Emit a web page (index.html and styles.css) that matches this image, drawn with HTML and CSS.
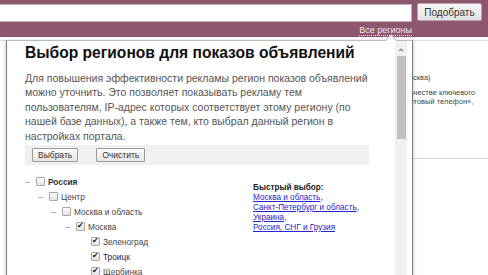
FILE: index.html
```html
<!DOCTYPE html>
<html lang="ru">
<head>
  <meta charset="UTF-8">
  <title>Выбор регионов</title>
  <meta name="viewport" content="width=device-width, initial-scale=1">
  <link rel="stylesheet" href="styles.css">
</head>
<body>

<div class="page">
  <header class="top">
    <div class="search">
      <input type="text" class="search-input">
      <button class="search-btn">Подобрать</button>
    </div>
    <div class="region-row">
      <a class="all-regions">Все регионы</a>
    </div>
  </header>

  <main class="behind">
    <div class="behind-col">
      <p class="b-line b-first">(Москва)</p>
      <p class="b-line">в качестве ключевого</p>
      <p class="b-line">«Сотовый телефон»,</p>
      <div class="b-rule"></div>
    </div>
  </main>

  <!-- всплывающее окно выбора регионов -->
  <div class="popup">
    <div class="notch"></div>
    <div class="popup-body">
      <div class="popup-content">
        <h1 class="popup-title">Выбор регионов для показов объявлений</h1>
        <p class="popup-text">Для повышения эффективности рекламы регион показов объявлений можно уточнить. Это позволяет показывать рекламу тем пользователям, IP-адрес которых соответствует этому региону (по нашей базе данных), а также тем, кто выбрал данный регион в настройках портала.</p>

        <div class="toolbar">
          <button class="tb-btn">Выбрать</button>
          <button class="tb-btn">Очистить</button>
        </div>

        <div class="tree-wrap">
          <div class="tree">
            <div class="row lvl0"><span class="dash">–</span><span class="cb"></span><span class="lbl bold">Россия</span></div>
            <div class="row lvl1"><span class="dash">–</span><span class="cb"></span><span class="lbl">Центр</span></div>
            <div class="row lvl2"><span class="dash">–</span><span class="cb"></span><span class="lbl">Москва и область</span></div>
            <div class="row lvl3"><span class="dash">–</span><span class="cb on"></span><span class="lbl">Москва</span></div>
            <div class="row lvl4"><span class="dash"></span><span class="cb on"></span><span class="lbl">Зеленоград</span></div>
            <div class="row lvl4"><span class="dash"></span><span class="cb on"></span><span class="lbl dark">Троицк</span></div>
            <div class="row lvl4"><span class="dash"></span><span class="cb on"></span><span class="lbl">Щербинка</span></div>
          </div>
          <div class="quick">
            <div class="quick-title">Быстрый выбор:</div>
            <a class="quick-link">Москва и область</a>,<br>
            <a class="quick-link">Санкт-Петербург и область</a>,<br>
            <a class="quick-link">Украина</a>,<br>
            <a class="quick-link">Россия, СНГ и Грузия</a>
          </div>
        </div>
      </div>

      <div class="scrollbar">
        <div class="sb-arrow"></div>
        <div class="sb-thumb"></div>
      </div>
    </div>
  </div>
</div>

</body>
</html>
```

FILE: styles.css
```css
body {
  margin: 0;
  font-family: 'Liberation Sans', Arial, sans-serif;
  background-color: #fff;
  color: #444;
  overflow: hidden;
}
.page {
  position: relative;
  width: 488px;
  height: 275px;
  overflow: hidden;
}
.top {
  background-color: #8f5670;
  height: 37px;
  padding-top: 3px;
  box-sizing: border-box;
}
.search {
  display: flex;
  align-items: flex-start;
}
.search-input {
  width: 412px;
  height: 18px;
  margin: 1px 0 0 0;
  padding: 0;
  border: 1px solid #bfa9b3;
  border-left: none;
  box-sizing: border-box;
  background: #fff;
}
.search-btn {
  margin-left: 5px;
  width: 65px;
  height: 18px;
  padding: 0;
  font-family: inherit;
  font-size: 10px;
  color: #333;
  border: 1px solid #b8a3ad;
  border-radius: 2px;
  background: linear-gradient(#f6f6f6, #e2e2e2);
}
.region-row {
  display: flex;
  justify-content: flex-end;
  padding-right: 76px;
  margin-top: 3px;
}
.all-regions {
  font-size: 9px;
  color: #f4e8ee;
  border-bottom: 1px dotted #e8d8e0;
  line-height: 10px;
}
.behind {
  border-top: 1px solid #ddd;
  margin-top: 3px;
}
.behind-col {
  margin-left: 400px;
  font-size: 7.5px;
  color: #444;
}
.b-line {
  margin: 0;
  line-height: 9px;
}
.b-first {
  margin-top: 32px;
  margin-bottom: 6px;
}
.b-rule {
  margin-top: 52px;
  border-top: 1px solid #d6d6d6;
}
.popup {
  position: absolute;
  left: 6px;
  top: 40px;
  width: 407px;
  height: 260px;
  background: #fff;
  border: 1px solid #7a7a7a;
  border-top-color: #bbb;
  box-sizing: border-box;
  box-shadow: 0 1px 4px rgba(0, 0, 0, 0.25);
}
.notch {
  position: absolute;
  top: -5px;
  left: 380px;
  width: 7px;
  height: 7px;
  background: #fff;
  border-left: 1px solid #bbb;
  border-top: 1px solid #bbb;
  transform: rotate(45deg);
}
.popup-body {
  display: flex;
  height: 100%;
  position: relative;
}
.popup-content {
  flex: 1;
  padding: 2px 18px 0 18px;
}
.popup-title {
  margin: 0;
  font-size: 15.6px;
  line-height: 19px;
  color: #111;
  font-weight: bold;
}
.popup-text {
  margin: 9px 0 0 0;
  font-size: 10.5px;
  line-height: 14.4px;
  color: #555;
}
.toolbar {
  margin-top: 2px;
  background-color: #f0f0f0;
  width: 344px;
  height: 20px;
  display: flex;
  align-items: center;
  padding-left: 7px;
  gap: 18px;
  box-sizing: border-box;
}
.tb-btn {
  height: 14px;
  padding: 0 5px;
  font-family: inherit;
  font-size: 8.5px;
  color: #333;
  border: 1px solid #9a9a9a;
  border-radius: 1px;
  background: linear-gradient(#fafafa, #e6e6e6);
  line-height: 12px;
}
.tree-wrap {
  display: flex;
  margin-top: 9px;
}
.tree {
  width: 228px;
  font-size: 8.3px;
  color: #444;
}
.row {
  display: flex;
  align-items: center;
  height: 15px;
}
.lvl1 { padding-left: 13px; }
.lvl2 { padding-left: 26px; }
.lvl3 { padding-left: 40px; }
.lvl4 { padding-left: 55px; }
.dash {
  width: 11px;
  color: #8080e8;
  font-size: 9px;
}
.cb {
  width: 7px;
  height: 7px;
  border: 1px solid #a8a8a8;
  border-radius: 1px;
  background: linear-gradient(#fdfdfd, #e4e4e4);
  margin-right: 3px;
  position: relative;
}
.cb.on::after {
  content: "✔";
  position: absolute;
  left: 0;
  top: -2px;
  font-size: 8px;
  line-height: 10px;
  color: #222;
}
.bold {
  font-weight: bold;
  color: #333;
}
.dark {
  color: #1a1a55;
}
.quick {
  margin-top: 9px;
  font-size: 8.2px;
  line-height: 10px;
  color: #2525cc;
}
.quick-title {
  font-weight: bold;
  color: #222;
}
.quick-link {
  color: #2525cc;
  text-decoration: underline;
}
.scrollbar {
  width: 12px;
  margin-right: 5px;
  background-color: #f1f1f1;
  display: flex;
  flex-direction: column;
  align-items: center;
}
.sb-arrow {
  margin-top: 7px;
  width: 0;
  height: 0;
  border-left: 3px solid transparent;
  border-right: 3px solid transparent;
  border-bottom: 3px solid #a3a3a3;
}
.sb-thumb {
  margin-top: 5px;
  width: 9px;
  height: 83px;
  background-color: #c1c1c1;
}
```
